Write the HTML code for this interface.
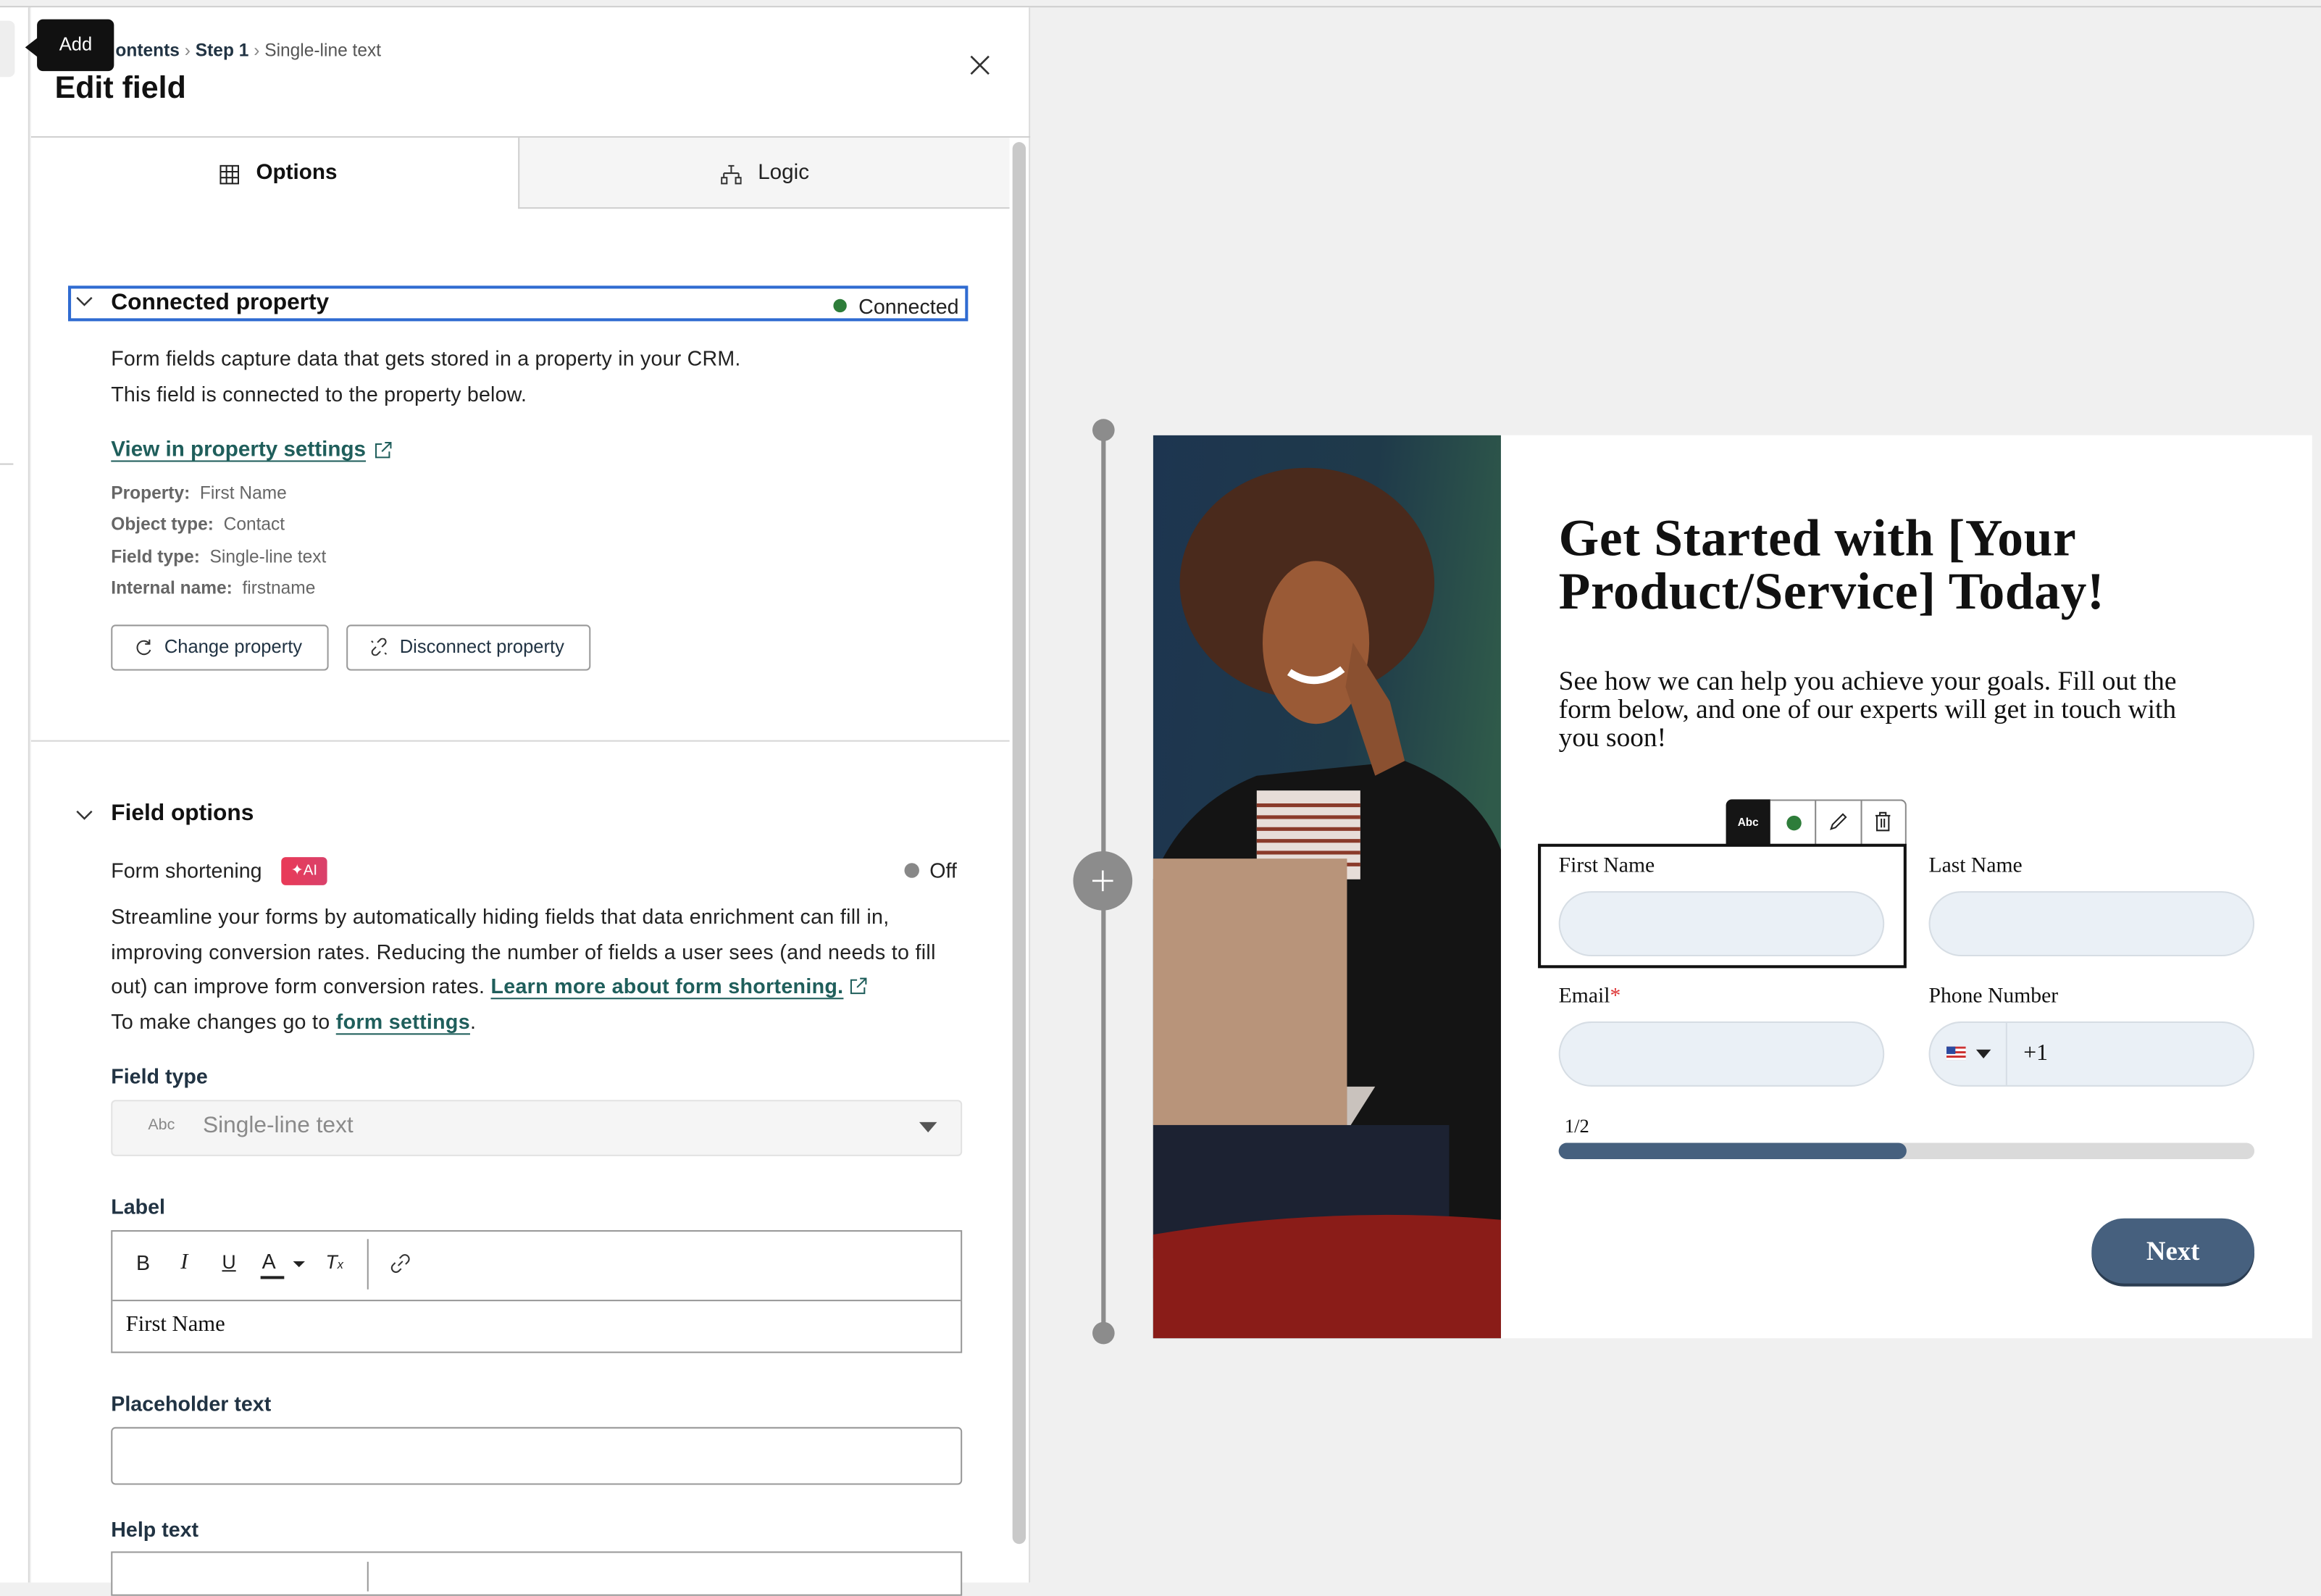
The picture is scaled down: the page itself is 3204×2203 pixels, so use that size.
<!DOCTYPE html>
<html><head><meta charset="utf-8">
<style>
*{box-sizing:border-box;margin:0;padding:0}
html,body{width:3204px;height:2184px;overflow:hidden;background:#f0f0f0}
#s{position:absolute;left:0;top:0;width:1568px;height:1069px;transform:scale(2.04337);transform-origin:0 0;background:#f0f0f0;font-family:"Liberation Sans",sans-serif;color:#213343}
.a{position:absolute}
.t{position:absolute;white-space:nowrap}
.sf{font-family:"Liberation Serif",serif;color:#111}
.lnk{color:#1f5e5b;font-weight:bold;text-decoration:underline;text-underline-offset:3px}
.btn{position:absolute;border:1px solid #9a9a9a;border-radius:3px;background:#fff;font-size:12.5px;color:#213343;height:31px;line-height:29px}
.lbl{font-size:14px;font-weight:bold;color:#213343}
.pill{position:absolute;background:#eaf0f6;border:1px solid #d6dde4;border-radius:22px;height:44px}
</style></head><body><div id="s">
<div class="a" style="left:0;top:4px;width:1568px;height:1px;background:#cfcfcf"></div>
<div class="a" style="left:0;top:5px;width:20px;height:1064px;background:#fff;border-right:1px solid #d8d8d8"></div>
<div class="a" style="left:0;top:14px;width:10px;height:38px;background:#eee;border-radius:0 4px 4px 0"></div>
<div class="a" style="left:0;top:313px;width:9px;height:1px;background:#ccc"></div>
<div class="a" style="left:21px;top:5px;width:675px;height:1064px;background:#fff;border-right:1px solid #dcdcdc"></div>
<div class="a" style="left:25px;top:13px;width:52px;height:35px;background:#111;border-radius:4px"></div>
<div class="a" style="left:17px;top:25px;width:0;height:0;border-top:7px solid transparent;border-bottom:7px solid transparent;border-right:9px solid #111"></div>
<div class="t" style="left:40px;top:23px;font-size:12.5px;color:#fff">Add</div>
<div class="t" style="left:78px;top:27px;font-size:12px;color:#213343"><b>ontents</b> <span style="color:#888">›</span> <b>Step 1</b> <span style="color:#888">›</span> <span style="color:#555">Single-line text</span></div>
<div class="t" style="left:37px;top:48px;font-size:21px;font-weight:bold;color:#111">Edit field</div>
<svg class="a" style="left:655px;top:37px" width="14" height="14"><path d="M1 1L13 13M13 1L1 13" stroke="#333" stroke-width="1.3"/></svg>
<div class="a" style="left:21px;top:92px;width:675px;height:1px;background:#d0d0d0"></div>
<div class="a" style="left:350px;top:93px;width:332px;height:48px;background:#f5f5f5;border-left:1px solid #d0d0d0;border-bottom:1px solid #d0d0d0"></div>
<svg class="a" style="left:148px;top:111px" width="14" height="14"><rect x="1" y="1" width="12" height="12" fill="none" stroke="#222"/><path d="M1 5H13M1 9H13M5 1V13M9 1V13" stroke="#222"/></svg>
<div class="t" style="left:173px;top:109px;font-size:14.5px;font-weight:bold;color:#111">Options</div>
<svg class="a" style="left:487px;top:111px" width="14" height="14"><path d="M5 1H9M7 1V6M2 6H12M2 6V9M12 6V9" stroke="#333" fill="none"/><rect x="0.5" y="9" width="3.5" height="4" fill="none" stroke="#333"/><rect x="10" y="9" width="3.5" height="4" fill="none" stroke="#333"/></svg>
<div class="t" style="left:512px;top:109px;font-size:14.5px;color:#222">Logic</div>
<div class="a" style="left:684px;top:96px;width:9px;height:947px;background:#c9c9c9;border-radius:5px"></div>
<div class="a" style="left:46px;top:193px;width:608px;height:24px;border:2px solid #2f6bd1"></div>
<svg class="a" style="left:51px;top:200px" width="12" height="8"><path d="M1 1L6 6L11 1" stroke="#333" fill="none" stroke-width="1.2"/></svg>
<div class="t" style="left:75px;top:196px;font-size:15.5px;font-weight:bold;color:#111">Connected property</div>
<div class="a" style="left:563px;top:202px;width:9px;height:9px;border-radius:50%;background:#2e7d3a"></div>
<div class="t" style="left:580px;top:199px;font-size:14px;color:#222">Connected</div>
<div class="t" style="left:75px;top:234px;font-size:14px;color:#222;letter-spacing:.1px">Form fields capture data that gets stored in a property in your CRM.</div>
<div class="t" style="left:75px;top:258px;font-size:14px;color:#222;letter-spacing:.1px">This field is connected to the property below.</div>
<div class="t lnk" style="left:75px;top:296px;font-size:14.5px">View in property settings</div>
<svg class="a" style="left:253px;top:298px" width="12" height="12"><path d="M5 2H1V11H10V7M7 1H11V5M11 1L5 7" stroke="#1f5e5b" fill="none"/></svg>
<div class="t" style="left:75px;top:326px;font-size:12px;color:#666"><b>Property:</b>&nbsp; First Name</div>
<div class="t" style="left:75px;top:347px;font-size:12px;color:#666"><b>Object type:</b>&nbsp; Contact</div>
<div class="t" style="left:75px;top:369px;font-size:12px;color:#666"><b>Field type:</b>&nbsp; Single-line text</div>
<div class="t" style="left:75px;top:390px;font-size:12px;color:#666"><b>Internal name:</b>&nbsp; firstname</div>
<div class="btn" style="left:75px;top:422px;width:147px;padding-left:35px">Change property</div>
<svg class="a" style="left:91px;top:431px" width="12" height="12"><path d="M10 4A4.5 4.5 0 1 0 10.5 8M10 1V4H7" stroke="#333" fill="none"/></svg>
<div class="btn" style="left:234px;top:422px;width:165px;padding-left:35px">Disconnect property</div>
<svg class="a" style="left:250px;top:431px" width="12" height="12"><path d="M4 6L2 8A2 2 0 0 0 5 11L7 9M8 6L10 4A2 2 0 0 0 7 1L5 3M1 2L2 3M10 10L11 11" stroke="#333" fill="none"/></svg>
<div class="a" style="left:21px;top:500px;width:661px;height:1px;background:#d6d6d6"></div>
<svg class="a" style="left:51px;top:547px" width="12" height="8"><path d="M1 1L6 6L11 1" stroke="#333" fill="none" stroke-width="1.2"/></svg>
<div class="t" style="left:75px;top:541px;font-size:15.5px;font-weight:bold;color:#111">Field options</div>
<div class="t" style="left:75px;top:580px;font-size:14px;color:#222">Form shortening</div>
<div class="a" style="left:190px;top:579px;width:31px;height:19px;border-radius:3px;background:linear-gradient(90deg,#e93a57,#d9416b);color:#fff;font-size:10px;line-height:19px;text-align:center">✦AI</div>
<div class="a" style="left:611px;top:583px;width:10px;height:10px;border-radius:50%;background:#888"></div>
<div class="t" style="left:628px;top:580px;font-size:14px;color:#222">Off</div>
<div class="a" style="left:75px;top:608px;width:578px;font-size:14px;line-height:23.5px;color:#222;letter-spacing:.15px">Streamline your forms by automatically hiding fields that data enrichment can fill in, improving conversion rates. Reducing the number of fields a user sees (and needs to fill out) can improve form conversion rates. <span class="lnk">Learn more about form shortening.</span> <svg width="12" height="12" style="vertical-align:-1px"><path d="M5 2H1V11H10V7M7 1H11V5M11 1L5 7" stroke="#1f5e5b" fill="none"/></svg><br>To make changes go to <span class="lnk">form settings</span>.</div>
<div class="t lbl" style="left:75px;top:719px">Field type</div>
<div class="a" style="left:75px;top:743px;width:575px;height:38px;background:#f5f5f5;border:1px solid #e2e2e2;border-radius:3px"></div>
<div class="t" style="left:100px;top:754px;font-size:10.5px;color:#888">Abc</div>
<div class="t" style="left:137px;top:752px;font-size:15.5px;color:#8a8a8a">Single-line text</div>
<div class="a" style="left:621px;top:758px;width:0;height:0;border-left:6px solid transparent;border-right:6px solid transparent;border-top:7px solid #555"></div>
<div class="t lbl" style="left:75px;top:807px">Label</div>
<div class="a" style="left:75px;top:831px;width:575px;height:83px;border:1px solid #999;background:#fff"></div>
<div class="a" style="left:76px;top:878px;width:573px;height:1px;background:#999"></div>
<div class="t" style="left:92px;top:845px;font-size:14px;color:#222">B</div>
<div class="t" style="left:122px;top:845px;font-size:15px;font-style:italic;color:#222;font-family:'Liberation Serif',serif">I</div>
<div class="t" style="left:150px;top:845px;font-size:13px;text-decoration:underline;color:#222">U</div>
<div class="t" style="left:177px;top:844px;font-size:14px;color:#222">A</div>
<div class="a" style="left:176px;top:862px;width:16px;height:2px;background:#222"></div>
<div class="a" style="left:198px;top:852px;border-left:4px solid transparent;border-right:4px solid transparent;border-top:4px solid #222"></div>
<div class="t" style="left:220px;top:845px;font-size:13px;font-style:italic;color:#222">T<span style="font-size:8px">x</span></div>
<div class="a" style="left:248px;top:837px;width:1px;height:34px;background:#999"></div>
<svg class="a" style="left:264px;top:847px" width="13" height="13"><path d="M5 8L8 5M6 3L7.5 1.5A2 2 0 0 1 11.5 5.5L10 7M3 6L1.5 7.5A2 2 0 0 0 5.5 11.5L7 10" stroke="#333" fill="none"/></svg>
<div class="t sf" style="left:85px;top:887px;font-size:15px">First Name</div>
<div class="t lbl" style="left:75px;top:940px">Placeholder text</div>
<div class="a" style="left:75px;top:964px;width:575px;height:39px;border:1px solid #999;border-radius:3px;background:#fff"></div>
<div class="t lbl" style="left:75px;top:1025px">Help text</div>
<div class="a" style="left:75px;top:1048px;width:575px;height:30px;border:1px solid #999;background:#fff"></div>
<div class="a" style="left:248px;top:1055px;width:1px;height:20px;background:#999"></div>
<div class="a" style="left:744px;top:290px;width:3px;height:610px;background:#8c8c8c"></div>
<div class="a" style="left:738px;top:283px;width:15px;height:15px;border-radius:50%;background:#8c8c8c"></div>
<div class="a" style="left:738px;top:893px;width:15px;height:15px;border-radius:50%;background:#8c8c8c"></div>
<div class="a" style="left:725px;top:575px;width:40px;height:40px;border-radius:50%;background:#8c8c8c"></div>
<svg class="a" style="left:737px;top:587px" width="16" height="16"><path d="M8 1V15M1 8H15" stroke="#fff" stroke-width="1.3"/></svg>
<svg class="a" style="left:779px;top:294px" width="235" height="610" viewBox="0 0 235 610">
<defs><linearGradient id="bg" x1="0" y1="0" x2="1" y2="0.3"><stop offset="0" stop-color="#1d3550"/><stop offset="0.6" stop-color="#1f3a4a"/><stop offset="1" stop-color="#2f5a4a"/></linearGradient></defs>
<rect width="235" height="610" fill="url(#bg)"/>
<path d="M0 300 Q20 250 70 230 L170 220 Q220 240 235 280 L235 610 L0 610Z" fill="#141414"/>
<rect x="70" y="240" width="70" height="60" fill="#e7ddd8"/>
<g stroke="#8a3a2a" stroke-width="2.5"><path d="M70 250H140M70 258H140M70 266H140M70 274H140M70 282H140M70 290H140"/></g>
<ellipse cx="104" cy="100" rx="86" ry="78" fill="#4a2a1c"/>
<ellipse cx="110" cy="140" rx="36" ry="55" fill="#9a5a36"/>
<path d="M92 160 Q110 172 128 158" stroke="#fff" stroke-width="5" fill="none"/>
<path d="M135 140 L160 180 L170 220 L150 230 L130 170Z" fill="#8a5030"/>
<rect x="0" y="286" width="131" height="180" fill="#b8947a"/>
<path d="M131 440 L150 440 L131 470Z" fill="#c9c2bd"/>
<rect x="0" y="466" width="200" height="90" fill="#1c2232"/>
<path d="M0 540 Q120 520 235 530 L235 610 L0 610Z" fill="#8a1c18"/>
</svg>
<div class="a" style="left:1014px;top:294px;width:548px;height:610px;background:#fff"></div>
<div class="a sf" style="left:1053px;top:346px;font-size:35px;line-height:36px;font-weight:bold;white-space:nowrap;letter-spacing:.3px">Get Started with [Your<br>Product/Service] Today!</div>
<div class="a sf" style="left:1053px;top:451px;width:448px;font-size:18.3px;line-height:19px">See how we can help you achieve your goals. Fill out the form below, and one of our experts will get in touch with you soon!</div>
<div class="a" style="left:1166px;top:540px;width:30px;height:31px;background:#151515;border-radius:4px 0 0 0;color:#fff;font-size:7.5px;font-weight:bold;text-align:center;line-height:31px">Abc</div>
<div class="a" style="left:1196px;top:540px;width:92px;height:31px;border:1px solid #888;border-left:none;border-radius:0 4px 0 0;background:#fff"></div>
<div class="a" style="left:1226px;top:541px;width:1px;height:30px;background:#888"></div>
<div class="a" style="left:1257px;top:541px;width:1px;height:30px;background:#888"></div>
<div class="a" style="left:1207px;top:551px;width:10px;height:10px;border-radius:50%;background:#2e7d3a"></div>
<svg class="a" style="left:1235px;top:548px" width="14" height="14"><path d="M2 12L3 9L10 2L12 4L5 11Z" stroke="#222" fill="none"/></svg>
<svg class="a" style="left:1266px;top:548px" width="12" height="14"><path d="M1 3H11M4 3V1H8V3M2 3V13H10V3M5 5V11M7 5V11" stroke="#222" fill="none"/></svg>
<div class="a" style="left:1039px;top:570px;width:249px;height:84px;border:2.5px solid #111"></div>
<div class="t sf" style="left:1053px;top:577px;font-size:14.5px">First Name</div>
<div class="pill" style="left:1053px;top:602px;width:220px"></div>
<div class="t sf" style="left:1303px;top:577px;font-size:14.5px">Last Name</div>
<div class="pill" style="left:1303px;top:602px;width:220px"></div>
<div class="t sf" style="left:1053px;top:665px;font-size:14.5px">Email<span style="color:#d33">*</span></div>
<div class="pill" style="left:1053px;top:690px;width:220px"></div>
<div class="t sf" style="left:1303px;top:665px;font-size:14.5px">Phone Number</div>
<div class="pill" style="left:1303px;top:690px;width:220px"></div>
<div class="a" style="left:1355px;top:691px;width:1px;height:42px;background:#d6dde4"></div>
<div class="a" style="left:1315px;top:707px;width:13px;height:9px;background:repeating-linear-gradient(#c33 0 1.5px,#fff 1.5px 3px)"></div>
<div class="a" style="left:1315px;top:707px;width:6px;height:5px;background:#2b4aa0"></div>
<div class="a" style="left:1335px;top:709px;border-left:5px solid transparent;border-right:5px solid transparent;border-top:6px solid #222"></div>
<div class="t sf" style="left:1367px;top:703px;font-size:15.5px">+1</div>
<div class="t sf" style="left:1057px;top:753px;font-size:13px">1/2</div>
<div class="a" style="left:1053px;top:772px;width:470px;height:11px;border-radius:6px;background:#dadada"></div>
<div class="a" style="left:1053px;top:772px;width:235px;height:11px;border-radius:6px;background:#46607e"></div>
<div class="a" style="left:1413px;top:823px;width:110px;height:44px;border-radius:22px;background:#46607e;box-shadow:0 2px 0 #2b3d52;color:#fff;font-family:'Liberation Serif',serif;font-weight:bold;font-size:18px;text-align:center;line-height:44px">Next</div>
</div></body></html>
